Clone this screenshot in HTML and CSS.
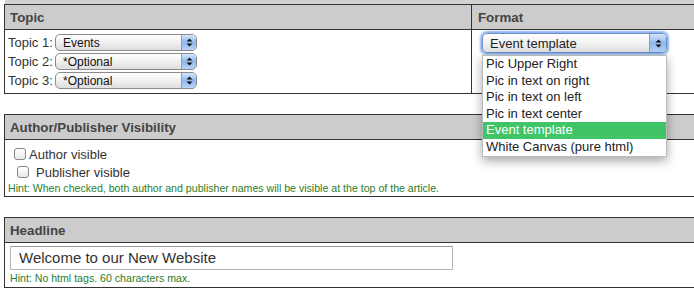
FILE: index.html
```html
<!DOCTYPE html>
<html lang="en">
<head>
    <meta charset="UTF-8">
    <title>Article Settings</title>
    <link rel="stylesheet" href="styles.css">
</head>
<body>
    <div class="top-strip"></div>

    <div class="panel">
        <div class="row head">
            <div class="cell topic-col">Topic</div>
            <div class="cell format-col">Format</div>
        </div>
        <div class="row body-row">
            <div class="cell topic-col topics">
                <div class="topic-line">
                    <span class="label">Topic 1:</span>
                    <div class="mini-select"><span>Events</span><i class="arrows"><svg width="7" height="9" viewBox="0 0 7 9"><path d="M3.5 0.5L6.5 3.5H0.5Z M3.5 8.5L6.5 5.5H0.5Z" fill="#111"/></svg></i></div>
                </div>
                <div class="topic-line">
                    <span class="label">Topic 2:</span>
                    <div class="mini-select"><span>*Optional</span><i class="arrows"><svg width="7" height="9" viewBox="0 0 7 9"><path d="M3.5 0.5L6.5 3.5H0.5Z M3.5 8.5L6.5 5.5H0.5Z" fill="#111"/></svg></i></div>
                </div>
                <div class="topic-line">
                    <span class="label">Topic 3:</span>
                    <div class="mini-select"><span>*Optional</span><i class="arrows"><svg width="7" height="9" viewBox="0 0 7 9"><path d="M3.5 0.5L6.5 3.5H0.5Z M3.5 8.5L6.5 5.5H0.5Z" fill="#111"/></svg></i></div>
                </div>
            </div>
            <div class="cell format-col format-cell">
                <div class="format-select"><span>Event template</span><i class="arrows big"><svg width="7" height="9" viewBox="0 0 7 9"><path d="M3.5 0.5L6.5 3.5H0.5Z M3.5 8.5L6.5 5.5H0.5Z" fill="#111"/></svg></i></div>
                <ul class="dropdown">
                    <li>Pic Upper Right</li>
                    <li>Pic in text on right</li>
                    <li>Pic in text on left</li>
                    <li>Pic in text center</li>
                    <li class="selected">Event template</li>
                    <li>White Canvas (pure html)</li>
                </ul>
            </div>
        </div>
    </div>

    <div class="panel">
        <div class="row head">
            <div class="cell">Author/Publisher Visibility</div>
        </div>
        <div class="section-body vis">
            <label class="check"><span class="box"></span>Author visible</label>
            <label class="check second"><span class="box"></span>Publisher visible</label>
            <div class="hint">Hint: When checked, both author and publisher names will be visible at the top of the article.</div>
        </div>
    </div>

    <div class="panel">
        <div class="row head">
            <div class="cell">Headline</div>
        </div>
        <div class="section-body headline">
            <div class="text-input">Welcome to our New Website</div>
            <div class="hint">Hint: No html tags. 60 characters max.</div>
        </div>
    </div>
</body>
</html>
```

FILE: styles.css
```css
* {
    box-sizing: border-box;
}
body {
    margin: 0;
    background: #fff;
    font-family: "Liberation Sans", Arial, sans-serif;
    color: #333;
    overflow: hidden;
    width: 694px;
    height: 295px;
}
.top-strip {
    height: 4px;
    margin-left: 5px;
    width: 720px;
    background: #d2d2d2;
}
.panel {
    margin-left: 4px;
    width: 760px;
    border: 1px solid #333;
    margin-bottom: 20px;
}
.row {
    display: flex;
}
.head {
    background: #cccccc;
    border-bottom: 1px solid #333;
    height: 25px;
    font-size: 13.3px;
    font-weight: bold;
    color: #444;
}
.head .cell {
    padding: 5px 0 0 5px;
}
.topic-col {
    width: 467px;
    border-right: 1px solid #333;
}
.format-col {
    flex: 1;
}
.head .format-col {
    padding-left: 6px;
}
.body-row {
    height: 63px;
}
.topics {
    padding: 3px 0 0 3px;
    font-size: 13px;
    color: #333;
}
.topic-line {
    display: flex;
    align-items: center;
    height: 19px;
}
.label {
    width: 47px;
}
.mini-select {
    display: flex;
    align-items: center;
    justify-content: space-between;
    width: 142px;
    height: 17px;
    border: 1px solid #8a8a8a;
    border-radius: 5px;
    background: linear-gradient(#ffffff, #f0f0f0 50%, #dedede);
    font-size: 12px;
    color: #111;
    overflow: hidden;
}
.mini-select span {
    padding-left: 7px;
}
.arrows {
    display: flex;
    align-items: center;
    justify-content: center;
    width: 15px;
    height: 100%;
    background: linear-gradient(#d6e6fb, #8fb8ef 50%, #b8d3f6);
    border-left: 1px solid #7f9fcf;
}
.format-cell {
    position: relative;
    padding: 3px 0 0 10px;
}
.format-select {
    display: flex;
    align-items: center;
    justify-content: space-between;
    width: 185px;
    height: 20px;
    border: 1px solid #6b8fc8;
    border-radius: 5px;
    background: linear-gradient(#ffffff, #f2f2f2 50%, #e2e2e2);
    box-shadow: 0 0 2px 2px #8fb4ee;
    font-size: 13px;
    color: #222;
    overflow: hidden;
}
.format-select span {
    padding-left: 7px;
}
.arrows.big {
    width: 17px;
}
.dropdown {
    position: absolute;
    top: 25px;
    left: 10px;
    width: 185px;
    margin: 0;
    padding: 0;
    list-style: none;
    background: #fff;
    border: 1px solid #bbb;
    box-shadow: 0 4px 10px rgba(0, 0, 0, 0.35);
    font-size: 13px;
    color: #222;
    z-index: 2;
}
.dropdown li {
    height: 16.6px;
    line-height: 16.6px;
    padding-left: 3px;
}
.dropdown li.selected {
    background: #3fc466;
    color: #fff;
}
.section-body {
    font-size: 13px;
}
.vis {
    height: 56px;
    padding: 5px 0 0 3px;
}
.check {
    display: flex;
    align-items: center;
    height: 18px;
    padding-left: 6px;
    color: #333;
}
.check.second {
    padding-left: 9px;
}
.check .box {
    width: 12px;
    height: 12px;
    border: 1px solid #888;
    border-radius: 3px;
    background: linear-gradient(#fff, #e8e8e8);
    margin-right: 3px;
}
.check.second .box {
    margin-right: 7px;
}
.hint {
    font-size: 10.6px;
    color: #2b7d2b;
}
.vis .hint {
    padding-top: 1px;
}
.headline {
    height: 44px;
    padding: 3px 0 0 5px;
}
.text-input {
    width: 443px;
    height: 24px;
    border: 1px solid #b5b5b5;
    border-top-color: #999;
    font-size: 15px;
    line-height: 22px;
    padding-left: 8px;
    color: #333;
    margin-bottom: 2px;
}
.headline .hint {
    padding-left: 0;
}
```
